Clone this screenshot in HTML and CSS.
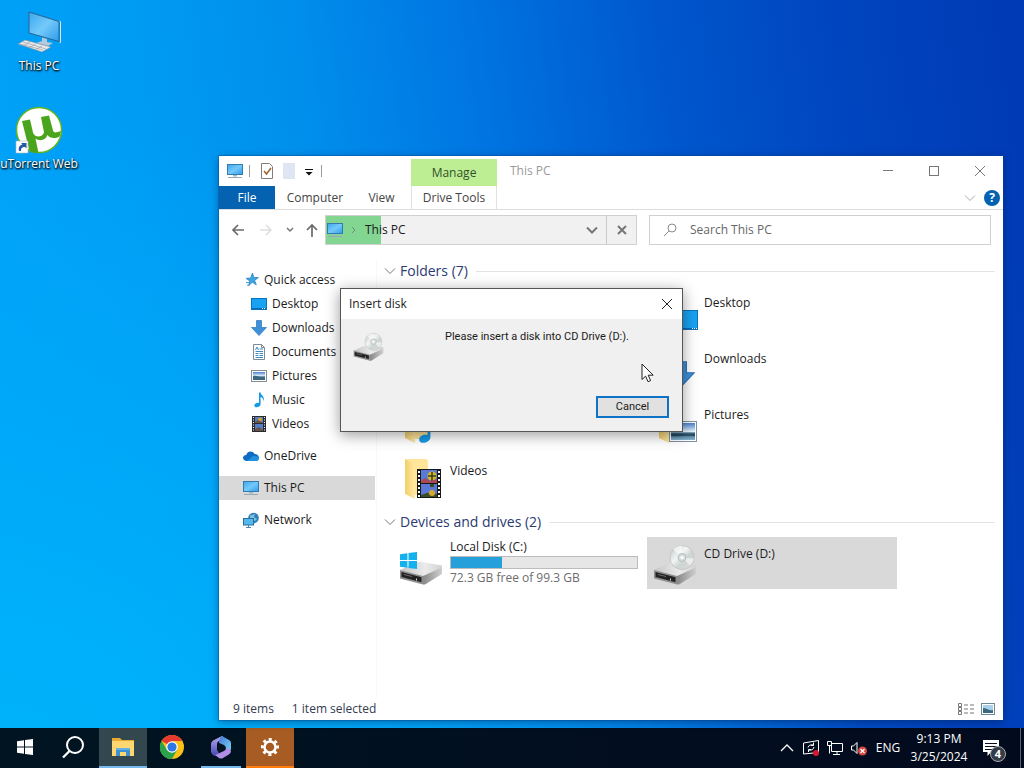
FILE: index.html
```html
<!DOCTYPE html>
<html lang="en">
<head>
<meta charset="utf-8">
<title>This PC</title>
<link rel="stylesheet" href="styles.css">
</head>
<body>
<svg class="sprite" aria-hidden="true">
  <defs>
    <linearGradient id="screen" x1="0" y1="0" x2="1" y2="1"><stop offset="0" stop-color="#3ba6ee"/><stop offset=".5" stop-color="#74c9fa"/><stop offset="1" stop-color="#2e9bea"/></linearGradient>
    <linearGradient id="folder" x1="0" x2="1"><stop offset="0" stop-color="#f3cf69"/><stop offset="1" stop-color="#ffe9a6"/></linearGradient>
    <linearGradient id="photo" x1="0" y1="0" x2="0" y2="1"><stop offset="0" stop-color="#4a80d0"/><stop offset=".5" stop-color="#e4f3fb"/><stop offset=".6" stop-color="#38627c"/><stop offset="1" stop-color="#86b4d0"/></linearGradient>
    <linearGradient id="driveTop" x1="0" x2="1"><stop offset="0" stop-color="#c4c4c4"/><stop offset=".6" stop-color="#ebebeb"/><stop offset="1" stop-color="#d2d2d2"/></linearGradient>
    <linearGradient id="driveSide" x1="0" x2="1"><stop offset="0" stop-color="#888"/><stop offset="1" stop-color="#cfcfcf"/></linearGradient>
    <linearGradient id="disc" x1="0" y1="0" x2="1" y2="1"><stop offset="0" stop-color="#bfc3c3"/><stop offset=".4" stop-color="#f2f5f5"/><stop offset=".6" stop-color="#ccd6d3"/><stop offset="1" stop-color="#dcdcdc"/></linearGradient>
    <linearGradient id="hexA" x1="0" y1="0" x2="0" y2="1"><stop offset="0" stop-color="#b7a8f0"/><stop offset="1" stop-color="#4646b0"/></linearGradient>
    <linearGradient id="hexB" x1="0" y1="0" x2="1" y2="1"><stop offset="0" stop-color="#4577d8"/><stop offset="1" stop-color="#78d6f2"/></linearGradient>
  </defs>
  <symbol id="i-pc" viewBox="0 0 16 16"><rect x=".5" y="1.500" width="15" height="10" fill="url(#screen)" stroke="#347cae"/><path d="M6 12h4v1.500H6z" fill="#9bb9cc"/><path d="M1 14.500h14" stroke="#9ba8b1"/></symbol>
  <symbol id="i-star" viewBox="0 0 16 16"><path d="M9.500 1l1.300 4.400 4.600.2-3.800 2.800 1.700 4.400-3.900-2.500-3.700 3.300 1-4.700-3.600-2.500 4.500-.5z" fill="#3fa4e2" stroke="#1d78ba" stroke-width=".7"/><path d="M3 10.500h3M4 13h2.500" stroke="#3fa4e2"/></symbol>
  <symbol id="i-desktop" viewBox="0 0 16 16"><rect x=".5" y="2.500" width="15" height="11" fill="#18a2f3" stroke="#0b73bd"/><path d="M1 12.500h14" stroke="#086bb0"/><path d="M11 12.500h4" stroke="#fff" stroke-dasharray="1"/></symbol>
  <symbol id="i-down" viewBox="0 0 16 16"><path d="M5.500.5h5v7h5L8 15.500.5 7.500h5z" fill="#3e91d9" stroke="#2a75ba" stroke-width=".7"/></symbol>
  <symbol id="i-doc" viewBox="0 0 16 16"><path d="M2.500.5h8l3 3v12h-11z" fill="#fff" stroke="#7d8b97"/><path d="M10.500.5v3h3" fill="none" stroke="#7d8b97"/><path d="M4.500 6l1.500-3 1.500 3M8.500 5H12M4.500 7.500H12M4.500 9.500h3M8.500 9.500H12M4.500 11.500h3M8.500 11.500H12M4.500 13.500H12" fill="none" stroke="#3a8cc4"/></symbol>
  <symbol id="i-pic" viewBox="0 0 16 16"><rect x=".5" y="2.500" width="15" height="11" fill="#fff" stroke="#858b90"/><rect x="2" y="4" width="12" height="8" fill="url(#photo)"/><path d="M2 8c4-1 6 2 12 1v3H2z" fill="#3c6780"/></symbol>
  <symbol id="i-music" viewBox="0 0 16 16"><path d="M8 .5h1.600c.2 3 4.300 3.500 3.200 8.500-.5-2.300-1.500-3.300-3.200-3.900v7.200c0 3-6.200 4.500-6.200 1.200 0-2 2.500-3.100 4.600-2.500z" fill="#169ae7"/></symbol>
  <symbol id="i-video" viewBox="0 0 16 16"><rect x="1" y="0" width="14" height="16" fill="#2b2b2b"/><path d="M2.500 1v15M13.500 1v15" stroke="#fff" stroke-dasharray="1 1.500"/><path d="M4 1h8v6H4zM4 8h8v7H4z" fill="#557ec8"/><circle cx="9" cy="3.500" r="2" fill="#d1a52b"/><path d="M4 6l3-2 5 3H4zM4 13l4-2 4 3v1H4z" fill="#6b5348"/></symbol>
  <symbol id="i-cloud" viewBox="0 0 16 16"><path d="M4 13C1.500 13 0 11.700 0 9.800 0 8 1.500 6.900 3.200 6.900 4.500 3 9.500 2.300 11.500 6 14 6 16 7.500 16 9.700 16 11.700 14.500 13 12.500 13z" fill="#0f6cc1"/><path d="M4 13l6-5c3 0 5.500.5 5.900 1.700C16 11.700 14.500 13 12.500 13z" fill="#1f93e0"/></symbol>
  <symbol id="i-net" viewBox="0 0 16 16"><circle cx="10.500" cy="6" r="5.300" fill="#2f7fb8"/><path d="M7 3c2 1 3-1 5-1l-1 3 3 2-2 2-5-2z" fill="#7cbfe0"/><rect x=".5" y="6.500" width="10" height="6.500" fill="#55b8ee" stroke="#286f9d"/><path d="M5.500 13v2M3 15.500h5" stroke="#4b87ad"/></symbol>
  <symbol id="i-drive" viewBox="0 0 44 24"><path d="M1 9L19 1q2-.6 4 0l20 3.500v3L24 16z" fill="url(#driveTop)"/><path d="M24 15L43 6.500V13L26 23.500h-2z" fill="url(#driveSide)"/><path d="M1 9l23 6v8.500L1 17.500z" fill="#8f8f8f"/><path d="M2.500 11l20 5.200v5L2.500 16z" fill="#222"/><path d="M5 13.500l8 2" stroke="#6b6b6b"/><path d="M17.500 17.500v2" stroke="#cde5ca"/></symbol>
  <symbol id="i-cd" viewBox="0 0 44 42"><use href="#i-drive" x="0" y="17" width="44" height="24"/><circle cx="29" cy="13.500" r="12" fill="url(#disc)" stroke="#b9bdbd" stroke-width=".7"/><path d="M29 13.500L20 5.500A12 12 0 0 1 29 1.500zM29 13.500l12 1a12 12 0 0 1-4 7z" fill="#fff" opacity=".55"/><circle cx="29" cy="13.500" r="4" fill="#d9dddd" stroke="#b5bcbc"/><circle cx="29" cy="13.500" r="1.600" fill="#fff"/></symbol>
  <symbol id="i-folder" viewBox="0 0 48 48"><path d="M7 3h20l2 2v34H13z" fill="#ffe49a"/><path d="M6 3l10 6v34L6 38z" fill="url(#folder)"/></symbol>
  <symbol id="i-flag" viewBox="0 0 16 16"><path d="M0 2.200L7 1.200V7.500H0zM8 1l8-1v7.500H8zM0 8.500h7v6.300l-7-1zM8 8.500h8V16l-8-1z" fill="currentColor"/></symbol>
  <symbol id="i-chev" viewBox="0 0 12 12"><path d="M1 3.500l5 5 5-5" fill="none" stroke="currentColor"/></symbol>
  <symbol id="i-close" viewBox="0 0 12 12"><path d="M1 1l10 10M11 1L1 11" fill="none" stroke="currentColor"/></symbol>
</svg>

<main class="desktop">
  <nav class="shortcuts" aria-label="Desktop">
    <a class="shortcut" href="#pc">
      <svg class="shortcut-icon" viewBox="0 0 48 48"><path d="M14 4l30 9.500v20L14 25z" fill="url(#screen)" stroke="#27648e"/><path d="M44.500 13l1 .5v21l-1 .5" fill="none" stroke="#d7e4ec"/><path d="M27 29.500l5 1.500v3l6 1-5 3-12-3 6-2z" fill="#b5c9d8"/><path d="M10 32l26 7-9 5-24-8z" fill="#e8e9eb" stroke="#7e8c98" stroke-width=".6"/><path d="M8 34l23 7M5 36l23 6M15 34l-7 4M21 36l-7 4M27 38l-7 4" stroke="#98a3ae" stroke-width=".7"/></svg>
      <span>This PC</span>
    </a>
    <a class="shortcut" href="#utorrent">
      <svg class="shortcut-icon" viewBox="0 0 48 48"><circle cx="24" cy="24" r="22.500" fill="#fff" stroke="#62b51f" stroke-width="1.500"/><path d="M7 15l8-1.500 3 13c1.500 5.500 9.500 5 11 0L26 11l8-1.500 4 15c.7 2.500 3 2.500 8 .5l-1.500 5.500c-4.500 2.500-10 2-12-1.500-2 5.500-8 6.500-12 3.500l3 14.500c-3 .2-6-.5-9-1.900z" fill="#4ba51c"/><rect x="1" y="35" width="12" height="12" fill="#fff" stroke="#a9b6bd" stroke-width=".6"/><path d="M4 45c-1-4 1-6 3.500-6.500L6 37h5.500v5.500L10 41c-3 0-4 1-4 4z" fill="#2759a3"/></svg>
      <span>uTorrent Web</span>
    </a>
  </nav>

  <section class="window" aria-label="This PC">
    <header class="ribbon">
      <div class="ribbon-left">
        <div class="quickbar">
          <svg class="icon" aria-hidden="true"><use href="#i-pc"/></svg>
          <i class="tick"></i>
          <button class="plain" aria-label="Properties"><svg class="icon" viewBox="0 0 16 16"><path d="M2.500.5h8l3 3v12h-11z" fill="#fff" stroke="#837c77"/><path d="M5 8l2.500 3L12 5" fill="none" stroke="#9c6334" stroke-width="1.500"/></svg></button>
          <button class="plain" aria-label="New folder"><svg class="icon" viewBox="0 0 16 16"><path d="M2 0h12v16H2z" fill="#dfe5f3"/></svg></button>
          <button class="plain" aria-label="Customize toolbar"><svg class="icon narrow" viewBox="0 0 12 16"><path d="M2 6.500h8" stroke="#111"/><path d="M2.500 9h7L6 12.500z" fill="#111"/></svg></button>
          <i class="tick"></i>
        </div>
        <div class="tabs"><button class="tab file">File</button><button class="tab computer">Computer</button><button class="tab view">View</button></div>
      </div>
      <div class="context"><div class="context-title">Manage</div><button class="tab tools">Drive Tools</button></div>
      <div class="ribbon-right">
        <div class="titlebar">
          <span class="title">This PC</span>
          <button class="winbtn" aria-label="Minimize"><svg viewBox="0 0 12 12"><path d="M1 5.500h10" stroke="currentColor"/></svg></button>
          <button class="winbtn" aria-label="Maximize"><svg viewBox="0 0 12 12"><rect x="1.500" y="1.500" width="9" height="9" fill="none" stroke="currentColor"/></svg></button>
          <button class="winbtn" aria-label="Close"><svg><use href="#i-close"/></svg></button>
        </div>
        <div class="helpbar">
          <button class="plain" aria-label="Expand ribbon"><svg class="small"><use href="#i-chev"/></svg></button>
          <button class="help" aria-label="Help">?</button>
        </div>
      </div>
    </header>

    <div class="navbar">
      <div class="arrows">
        <button class="plain" aria-label="Back"><svg class="icon" viewBox="0 0 16 16"><path d="M14 8H3M8 3L3 8l5 5" fill="none" stroke="#6b6b6b" stroke-width="1.700"/></svg></button>
        <button class="plain" aria-label="Forward"><svg class="icon" viewBox="0 0 16 16"><path d="M2 8h11M8 3l5 5-5 5" fill="none" stroke="#dedede" stroke-width="1.500"/></svg></button>
        <button class="plain recent" aria-label="Recent locations"><svg viewBox="0 0 8 8"><path d="M1 2l3 3 3-3" fill="none" stroke="#777" stroke-width="1.500"/></svg></button>
        <button class="plain" aria-label="Up"><svg class="icon narrow" viewBox="2 0 12 16"><path d="M8 15V3M3 8l5-5 5 5" fill="none" stroke="#6b6b6b" stroke-width="1.700"/></svg></button>
      </div>
      <div class="address">
        <svg class="icon" aria-hidden="true"><use href="#i-pc"/></svg>
        <svg class="crumb" viewBox="0 0 8 8"><path d="M2 1l3 3-3 3" fill="none" stroke="#6f8f78"/></svg>
        <a class="path" href="#pc">This PC</a>
        <button class="plain" aria-label="Previous locations"><svg class="small bold"><use href="#i-chev"/></svg></button>
        <button class="stop" aria-label="Stop"><svg viewBox="0 0 12 12"><path d="M2 2l8 8M10 2l-8 8" stroke="#777" stroke-width="2"/></svg></button>
      </div>
      <label class="search"><svg class="icon" viewBox="0 0 16 16"><circle cx="10" cy="6" r="4" fill="none" stroke="#8a8a8a"/><path d="M7 9l-5 5" stroke="#8a8a8a"/></svg><input type="search" placeholder="Search This PC" aria-label="Search This PC"></label>
    </div>

    <div class="content">
      <nav class="sidebar" aria-label="Locations">
        <a class="place" href="#q"><svg class="icon"><use href="#i-star"/></svg>Quick access</a>
        <a class="place sub" href="#d"><svg class="icon"><use href="#i-desktop"/></svg>Desktop</a>
        <a class="place sub" href="#dl"><svg class="icon"><use href="#i-down"/></svg>Downloads</a>
        <a class="place sub" href="#doc"><svg class="icon"><use href="#i-doc"/></svg>Documents</a>
        <a class="place sub" href="#p"><svg class="icon"><use href="#i-pic"/></svg>Pictures</a>
        <a class="place sub" href="#m"><svg class="icon"><use href="#i-music"/></svg>Music</a>
        <a class="place sub" href="#v"><svg class="icon"><use href="#i-video"/></svg>Videos</a>
        <a class="place root" href="#o"><svg class="icon"><use href="#i-cloud"/></svg>OneDrive</a>
        <a class="place root selected" href="#pc"><svg class="icon"><use href="#i-pc"/></svg>This PC</a>
        <a class="place root" href="#n"><svg class="icon"><use href="#i-net"/></svg>Network</a>
      </nav>
      <div class="files">
        <h2 class="group"><svg class="small"><use href="#i-chev"/></svg>Folders (7)</h2>
        <div class="tiles folders">
          <a class="tile second" href="#d"><svg class="tile-icon" viewBox="0 0 48 48"><use href="#i-folder"/><rect x="17.500" y="22.500" width="27" height="19" fill="#18a2f3" stroke="#0b73bd"/><path d="M18 40.500h27" stroke="#086bb0"/><path d="M39 40.500h6" stroke="#fff" stroke-dasharray="1"/></svg><span>Desktop</span></a>
          <a class="tile second" href="#dl"><svg class="tile-icon" viewBox="0 0 48 48"><use href="#i-folder"/><use href="#i-down" x="17" y="17" width="25" height="25"/></svg><span>Downloads</span></a>
          <a class="tile" href="#m" aria-label="Music"><svg class="tile-icon" viewBox="0 0 48 48"><use href="#i-folder"/><use href="#i-music" x="14" y="15" width="29" height="29"/></svg></a>
          <a class="tile" href="#p"><svg class="tile-icon" viewBox="0 0 48 48"><use href="#i-folder"/><rect x="16.500" y="21.500" width="27" height="20" fill="#fff" stroke="#8191a5"/><rect x="18" y="23" width="24" height="17" fill="url(#photo)"/><path d="M18 34c8-1 13 1 24 0v2c-10-1-17 1-24 0z" fill="#24485f"/></svg><span>Pictures</span></a>
          <a class="tile" href="#v"><svg class="tile-icon" viewBox="0 0 48 48"><use href="#i-folder"/><rect x="18" y="13" width="24" height="29" fill="#181818"/><path d="M20 15v26M40 15v26" stroke="#fff" stroke-width="2" stroke-dasharray="2"/><path d="M22 14h16v13H22zM22 28h16v13H22z" fill="#5a78d5"/><circle cx="33" cy="20" r="4.500" fill="#d8b628"/><path d="M33 16v9M29 20h8" stroke="#34421c" stroke-width="1.500"/><path d="M22 25l4-3 5 3 7-2v4H22z" fill="#aa4854"/><path d="M31 28h4v3h-4zM22 39l6-2 10 1v3H22z" fill="#394b27"/><circle cx="33" cy="37" r="3" fill="#d8a928"/></svg><span>Videos</span></a>
        </div>
        <h2 class="group"><svg class="small"><use href="#i-chev"/></svg>Devices and drives (2)</h2>
        <div class="tiles">
          <a class="tile" href="#c"><svg class="tile-icon" viewBox="0 0 48 48"><use href="#i-drive" x="0" y="22" width="44" height="24"/><use class="flag" href="#i-flag" x="1" y="13" width="17" height="17"/></svg>
            <span class="disk"><span>Local Disk (C:)</span><span class="meter"><span class="used" style="width:27.2%"></span></span><span class="free">72.3 GB free of 99.3 GB</span></span></a>
          <a class="tile active" href="#cd"><svg class="tile-icon" viewBox="0 0 48 48"><use href="#i-cd" x="0" y="5" width="44" height="42"/></svg><span>CD Drive (D:)</span></a>
        </div>
      </div>
    </div>

    <footer class="status">
      <span>9 items</span><span>1 item selected</span>
      <button class="plain push" aria-label="Details view"><svg class="icon" viewBox="0 0 16 16"><path d="M.5 2.500h3v3h-3zM.5 6.500h3v3h-3zM.5 10.500h3v3h-3z" fill="none" stroke="#777"/><path d="M6 4h10M6 8h10M6 12h10" stroke="#777" stroke-dasharray="4 2"/></svg></button>
      <button class="plain" aria-label="Large icons view"><svg class="icon" viewBox="0 0 16 16"><rect x="1.500" y="2.500" width="13" height="11" fill="#fff" stroke="#6f8796"/><rect x="3" y="4" width="10" height="8" fill="#a9d1ee"/><path d="M3 7c4 0 5 3 10 2v3H3z" fill="#3c6780"/></svg></button>
    </footer>
  </section>

  <section class="dialog" role="dialog" aria-labelledby="dialog-title">
    <header class="dialog-head"><h1 id="dialog-title">Insert disk</h1><button class="plain" aria-label="Close"><svg class="small"><use href="#i-close"/></svg></button></header>
    <div class="dialog-body">
      <svg class="dialog-icon"><use href="#i-cd"/></svg>
      <p>Please insert a disk into CD Drive (D:).</p>
    </div>
    <div class="dialog-actions"><button class="cancel">Cancel</button></div>
  </section>
  <svg class="pointer" viewBox="0 0 13 20" aria-hidden="true"><path d="M1 1v15.500l3.600-3.400 2.400 5.600 2.600-1.100-2.400-5.400h5z" fill="#fff" stroke="#222"/></svg>
</main>

<footer class="taskbar">
  <button class="task" aria-label="Start"><svg class="icon white"><use href="#i-flag"/></svg></button>
  <button class="task" aria-label="Search"><svg class="app" viewBox="0 0 24 24"><circle cx="13" cy="10" r="8" fill="none" stroke="#fff" stroke-width="2"/><path d="M7.500 16L1 22.500" stroke="#fff" stroke-width="2.300"/></svg></button>
  <button class="task open" aria-label="File Explorer"><svg class="app" viewBox="0 0 24 24"><path d="M1 3h8l2 2h12v16H1z" fill="#e8aa35"/><path d="M3 6h20v15H1V6z" fill="#ffd66f"/><path d="M5 13h14v8h-4v-4H9v4H5z" fill="#3d91d0"/><path d="M5 13h14v2H5z" fill="#64b1e6"/></svg></button>
  <button class="task" aria-label="Chrome"><svg class="app" viewBox="0 0 24 24"><circle cx="12" cy="12" r="12" fill="#fbc116"/><path d="M12 12L1.600 6A12 12 0 0 1 22.400 6H12z" fill="#e33b2e"/><path d="M1.600 6L7 15l5 3-3 6A12 12 0 0 1 1.600 6z" fill="#2ba24c"/><path d="M7 15h10l-5 9a12 12 0 0 1-3-.4z" fill="#2ba24c"/><circle cx="12" cy="12" r="5.800" fill="#fff"/><circle cx="12" cy="12" r="4.600" fill="#2c78e4"/></svg></button>
  <button class="task running" aria-label="Microsoft 365"><svg class="app" viewBox="0 0 24 24"><path d="M13 1L4 5.500Q2 7 2 9v8q1 3 4 4l4-3-2-3V9q0-2 2-3l5-3z" fill="url(#hexA)"/><path d="M13 1q-3 2-3 7l5 2q2 1 2 4v3l4-1q1-1 1-3V8q0-2-2-3z" fill="url(#hexB)"/><path d="M6 20l9-4q2-1 2-3 5 1 5 4-1 2-3 3l-5 3q-2 1-4 0z" fill="#b08de7"/></svg></button>
  <button class="task settings" aria-label="Settings"><svg class="app" viewBox="0 0 24 24"><circle cx="12" cy="12" r="7.500" fill="none" stroke="#fff" stroke-width="3.200" stroke-dasharray="2.890 3" transform="rotate(-11 12 12)"/><circle cx="12" cy="12" r="5.500" fill="none" stroke="#fff" stroke-width="2.500"/></svg></button>
  <div class="tray">
    <button class="plain" aria-label="Show hidden icons"><svg class="icon" viewBox="0 0 16 16"><path d="M2 11l6-6 6 6" fill="none" stroke="#fff" stroke-width="1.300"/></svg></button>
    <button class="plain" aria-label="Update status"><svg class="icon" viewBox="0 0 16 16"><path d="M.5 3L15.500.5v12L.5 14z" fill="none" stroke="#fff"/><path d="M5 7.500Q6 4 10.500 5M10.500 2.500V5.500H8M11 7Q10 11 5.500 10M5.500 12V9.500H8" fill="none" stroke="#fff"/><circle cx="13" cy="13" r="3" fill="#d81832"/></svg></button>
    <button class="plain" aria-label="Network"><svg class="icon" viewBox="0 0 16 16"><path d="M4.500 3.500h11v8h-11zM10 12v2.500M6 14.500h7" fill="none" stroke="#fff"/><path d="M.5 1.500h4v4h-4zM2.500 5.500v8" fill="#06101e" stroke="#fff"/></svg></button>
    <button class="plain" aria-label="Volume muted"><svg class="icon" viewBox="0 0 16 16"><path d="M.5 6h2L6 2.500v11L2.500 10h-2z" fill="none" stroke="#fff"/><circle cx="11.500" cy="11" r="4.500" fill="#d9443f"/><path d="M9.500 9l4 4M13.500 9l-4 4" stroke="#fff" stroke-width="1.300"/></svg></button>
    <button class="plain lang">ENG</button>
    <button class="plain clock"><span>9:13 PM</span><span>3/25/2024</span></button>
    <button class="plain notice" aria-label="4 notifications"><svg viewBox="0 0 18 18"><path d="M1 1h16v12H9l-3.500 4V13H1z" fill="#fff"/><path d="M3 4.500h12M3 7.500h12M3 10.500h8" stroke="#06101e"/></svg><span class="badge">4</span></button>
    <i class="peek"></i>
  </div>
</footer>
</body>
</html>
```

FILE: styles.css
```css
* { box-sizing: border-box; }

body {
  margin: 0;
  height: 100vh;
  display: flex;
  flex-direction: column;
  overflow: hidden;
  font: 12px/16px "Open Sans", "Noto Sans", sans-serif;
  color: #1b1b1b;
  background:
    radial-gradient(ellipse at 0% 100%, #00b4fa 0%, rgba(0, 172, 250, 0.7) 30%, rgba(0, 150, 245, 0) 60%),
    linear-gradient(82deg, #00a4fa 0%, #009cf4 20%, #0090ec 34%, #0076e2 50%, #0056cc 68%, #0044be 84%, #003ab4 100%);
}

a { color: inherit; text-decoration: none; }
button { font: inherit; color: inherit; padding: 0; border: 0; background: none; }
svg { display: block; flex: none; }
.sprite { position: absolute; width: 0; height: 0; }
.icon { width: 16px; height: 16px; }
.narrow { width: 12px; }
.small { width: 12px; height: 12px; color: #777; }

.desktop { flex: 1; position: relative; min-height: 0; }

.shortcuts {
  display: flex;
  flex-direction: column;
  gap: 24px;
  width: 78px;
  padding-top: 8px;
}
.shortcut {
  display: flex;
  flex-direction: column;
  align-items: center;
  gap: 2px;
  padding-bottom: 8px;
  color: #fff;
  white-space: nowrap;
  text-shadow: 1px 1px 2px #000, 0 1px 2px #000;
}
.shortcut-icon { width: 48px; height: 48px; }

.window {
  position: absolute;
  top: 156px;
  right: 21px;
  bottom: 8px;
  left: 219px;
  display: flex;
  flex-direction: column;
  background: #fff;
  box-shadow: 0 0 0 1px rgba(0, 70, 140, 0.35), 0 2px 8px rgba(0, 20, 70, 0.45);
}

.ribbon { display: flex; height: 54px; border-bottom: 1px solid #dcdcdc; }
.ribbon-left { width: 192px; }
.quickbar { display: flex; align-items: center; gap: 6px; height: 30px; padding-left: 8px; }
.tick { width: 1px; height: 12px; margin-right: 3px; background: #999; }
.tabs { display: flex; height: 23px; }
.tab { height: 23px; color: #444; text-align: center; }
.file { width: 56px; color: #fff; background: #0562b1; }
.computer { width: 80px; }
.view { width: 53px; }
.context { width: 86px; padding-top: 3px; }
.context-title { height: 27px; line-height: 28px; text-align: center; color: #33502a; background: #bdee94; }
.tools { width: 100%; border: solid #e1e1e1; border-width: 0 1px; }
.ribbon-right { flex: 1; }
.titlebar { display: flex; align-items: center; height: 30px; }
.title { flex: 1; padding-left: 13px; color: #999; }
.winbtn { display: grid; place-items: center; width: 46px; height: 30px; color: #777; }
.winbtn svg { width: 12px; height: 12px; }
.helpbar { display: flex; align-items: center; justify-content: flex-end; gap: 8px; height: 23px; padding-right: 3px; }
.helpbar .small { color: #aaa; }
.help { width: 16px; height: 16px; border-radius: 50%; color: #fff; font-weight: 700; background: #0562b1; }

.navbar { display: grid; grid-template-columns: 106px 312fr 12px 342fr; align-items: center; height: 40px; padding-right: 12px; }
.arrows { display: flex; align-items: center; gap: 12px; padding-left: 11px; }
.recent svg { width: 8px; height: 8px; }
.address {
  display: flex;
  align-items: center;
  height: 30px;
  border: 1px solid #d0d0d0;
  background: linear-gradient(90deg, #83d691 55px, #f1f1f1 55px);
}
.address .icon { margin-left: 1px; }
.crumb { width: 8px; height: 8px; margin: 0 7px; }
.path { flex: 1; }
.bold { stroke-width: 2px; margin-right: 8px; }
.stop { display: grid; place-items: center; width: 30px; height: 28px; border-left: 1px solid #c9c9c9; }
.stop svg { width: 12px; height: 12px; }
.search { grid-column: 4; display: flex; align-items: center; gap: 12px; height: 30px; padding-left: 12px; border: 1px solid #d0d0d0; }
.search input { flex: 1; min-width: 0; border: 0; outline: 0; padding: 0; font: inherit; background: none; }
.search input::placeholder { color: #666; opacity: 1; }

.content { flex: 1; display: flex; min-height: 0; padding-top: 10px; }
.sidebar { width: 158px; padding-top: 8px; border-right: 1px solid #f8f8f8; }
.place { display: flex; align-items: center; gap: 5px; width: 156px; height: 24px; padding-left: 24px; }
.sub { padding-left: 32px; }
.root { margin-top: 8px; }
.selected { background: #d9d9d9; }

.files { flex: 1; padding: 0 8px 0 7px; }
.group {
  display: flex;
  align-items: center;
  gap: 4px;
  height: 22px;
  margin: 0 0 4px;
  font-size: 14px;
  font-weight: 400;
  color: #2b3a72;
}
.group::after { content: ""; flex: 1; height: 1px; margin-left: 4px; background: #e3e3e3; }
.tiles { display: grid; grid-template-columns: 250px 250px; gap: 4px; padding-left: 9px; }
.folders { margin-bottom: 5px; }
.second { grid-column: 2; }
.tile { display: flex; gap: 3px; height: 52px; padding: 2px 6px; line-height: 30px; }
.tile-icon { width: 48px; height: 48px; }
.active { background: #d9d9d9; }
.disk { flex: 1; line-height: 16px; margin-right: -1px; }
.disk > span { display: block; }
.meter { height: 13px; margin: 1px 0; border: 1px solid #bcbcbc; background: #e6e6e6; }
.used { display: block; height: 11px; background: #26a0da; }
.free { color: #6d6d6d; }
.flag { color: #14b1ec; }

.status { display: flex; align-items: center; gap: 18px; height: 22px; padding: 0 7px 0 14px; color: #333b50; }
.push { margin-left: auto; }
.status .push + .plain { margin-left: -12px; }

.dialog {
  position: absolute;
  top: 288px;
  left: 340px;
  width: 343px;
  display: flex;
  flex-direction: column;
  border: 1px solid #555;
  background: #f0f0f0;
  box-shadow: 0 3px 14px rgba(0, 0, 0, 0.4);
}
.dialog-head { display: flex; align-items: center; justify-content: space-between; height: 30px; padding: 0 9px 0 8px; background: #fff; }
.dialog-head h1 { margin: 0; font-size: 12px; font-weight: 400; }
.dialog-head .small { color: #222; }
.dialog-body { display: flex; gap: 61px; height: 77px; padding: 10px 12px; font-family: Roboto, sans-serif; font-size: 11px; }
.dialog-body p { margin: 0; white-space: nowrap; }
.dialog-icon { width: 31px; height: 36px; }
.dialog-actions { display: flex; justify-content: flex-end; padding: 0 13px 13px; }
.cancel { width: 73px; height: 22px; border: 2px solid #0f73c5; background: #e1e1e1; font-family: Roboto, sans-serif; font-size: 11px; }
.pointer { position: absolute; top: 363px; left: 641px; width: 13px; height: 20px; }

.taskbar { display: flex; gap: 1px; height: 40px; padding-left: 1px; color: #fff; background: linear-gradient(90deg, #001521, #020e20 60%, #020b1d); }
.task { display: grid; place-items: center; width: 48px; height: 40px; border-bottom: 2px solid transparent; }
.white { color: #fff; }
.app { width: 24px; height: 24px; }
.open { background: #33474f; border-color: #76b9ed; }
.running { background: linear-gradient(#76b9ed, #76b9ed) center bottom / 40px 2px no-repeat border-box; }
.settings { background: #a65c22; border-color: #ff7c0a; }
.tray { display: flex; align-items: center; gap: 8px; margin-left: auto; padding-right: 3px; }
.lang { width: 26px; }
.clock { display: flex; flex-direction: column; width: 60px; line-height: 18px; text-align: center; }
.notice { position: relative; width: 24px; height: 24px; margin: 0 6px 0 5px; }
.notice svg { width: 18px; height: 18px; }
.badge { position: absolute; top: 10px; left: 8px; width: 16px; height: 16px; border: 1px solid #aaa; border-radius: 50%; background: #333c48; line-height: 14px; font-size: 11px; font-weight: 700; }
.peek { width: 1px; height: 40px; background: #59616d; }
```
